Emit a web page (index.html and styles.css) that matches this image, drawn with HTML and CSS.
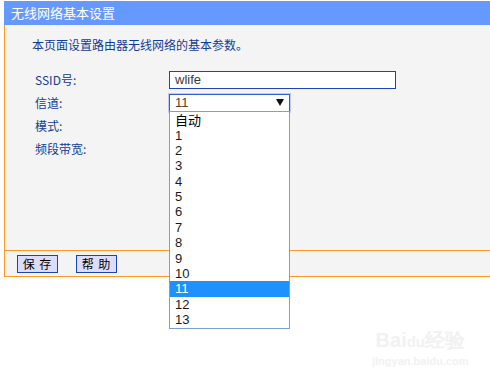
FILE: index.html
```html
<!DOCTYPE html>
<html>
<head>
<meta charset="utf-8">
<link rel="stylesheet" href="styles.css">
</head>
<body>
<div class="page">
  <div class="title">无线网络基本设置</div>
  <div class="panel">
    <div class="body">
      <p class="intro">本页面设置路由器无线网络的基本参数。</p>
      <div class="form">
        <span class="label">SSID号:</span>
        <div class="field"><div class="text-input">wlife</div></div>
        <span class="label">信道:</span>
        <div class="field">
          <div class="select"><span>11</span><span class="arrow"></span>
            <ul class="options">
              <li class="cjk">自动</li>
              <li>1</li><li>2</li><li>3</li><li>4</li><li>5</li><li>6</li>
              <li>7</li><li>8</li><li>9</li><li>10</li>
              <li class="selected">11</li><li>12</li><li>13</li>
            </ul>
          </div>
        </div>
        <span class="label">模式:</span>
        <div class="field"></div>
        <span class="label">频段带宽:</span>
        <div class="field"></div>
      </div>
    </div>
    <div class="actions">
      <div class="btn">保 存</div>
      <div class="btn">帮 助</div>
    </div>
  </div>
  <div class="watermark">
    <div class="wm-logo">Bai<span class="wm-du">du</span>经验</div>
    <div class="wm-url">jingyan.baidu.com</div>
  </div>
</div>
</body>
</html>
```
FILE: styles.css
```css
* { box-sizing: border-box; }
html, body { margin: 0; background: #ffffff; }
body {
  font-family: "Noto Sans CJK SC", "DejaVu Sans", sans-serif;
  font-size: 12px;
  width: 490px;
  height: 380px;
  overflow: hidden;
}
.page {
  position: relative;
  padding: 1px 0 0 4px;
  height: 380px;
}
.title {
  height: 24px;
  line-height: 24px;
  background: #6699ff;
  color: #ffffff;
  font-size: 13px;
  padding-left: 7px;
}
.panel {
  background: #f4f4f4;
  border-left: 1px solid #ff9922;
}
.body {
  height: 225px;
  padding: 12px 0 0 27px;
}
.intro {
  margin: 0;
  line-height: 16px;
  color: #123c96;
  font-size: 12px;
}
.form {
  margin-top: 15px;
  margin-left: 3px;
  display: grid;
  grid-template-columns: 134px 1fr;
  grid-auto-rows: 23px;
  align-items: center;
}
.label {
  color: #123c96;
  font-size: 12px;
  line-height: 16px;
}
.field { height: 18px; }
.text-input {
  width: 227px;
  height: 18px;
  border: 1px solid #1d44b0;
  background: #ffffff;
  font-family: "Liberation Sans", sans-serif;
  font-size: 13px;
  line-height: 16px;
  padding-left: 5px;
  color: #3a3a3a;
}
.select {
  position: relative;
  width: 121px;
  height: 18px;
  border: 1px solid #2f5fd0;
  box-shadow: 0 0 0 1px #b9cdf3;
  background: #ffffff;
  font-family: "Liberation Sans", sans-serif;
  font-size: 13px;
  line-height: 16px;
  padding-left: 5px;
  color: #5a4020;
  display: flex;
  justify-content: space-between;
  align-items: center;
}
.arrow {
  width: 0;
  height: 0;
  margin-right: 5px;
  border-left: 4px solid transparent;
  border-right: 4px solid transparent;
  border-top: 7px solid #111111;
}
.options {
  position: absolute;
  left: -1px;
  top: 16px;
  width: 121px;
  margin: 0;
  padding: 0;
  list-style: none;
  background: #ffffff;
  border: 1px solid #7b9dd8;
  z-index: 5;
  font-family: "Liberation Sans", sans-serif;
  font-size: 13px;
  color: #1a1a1a;
}
.options li {
  height: 15.4px;
  line-height: 15.4px;
  padding-left: 5px;
}
.options li.cjk {
  font-family: "Noto Sans CJK SC", sans-serif;
  font-size: 13px;
  height: 16px;
  line-height: 16px;
  color: #000000;
}
.options li.selected {
  background: #1e90ff;
  color: #ffffff;
}
.actions {
  height: 27px;
  border-top: 1px solid #ff9922;
  border-bottom: 1px solid #ff9922;
  display: flex;
  align-items: center;
  gap: 18px;
  padding-left: 12px;
}
.btn {
  width: 41px;
  height: 18px;
  border: 1px solid #1d44b0;
  background: #dcdcfc;
  color: #000000;
  font-size: 12px;
  line-height: 16px;
  text-align: center;
  letter-spacing: 1px;
}
.watermark {
  position: absolute;
  left: 372px;
  top: 328px;
  color: #f1f1f1;
  font-family: "Liberation Sans", sans-serif;
  text-align: center;
}
.wm-logo {
  font-size: 20px;
  font-weight: bold;
  line-height: 24px;
}
.wm-du { font-size: 15px; }
.wm-url {
  font-size: 11px;
  font-weight: bold;
  line-height: 14px;
}
```
